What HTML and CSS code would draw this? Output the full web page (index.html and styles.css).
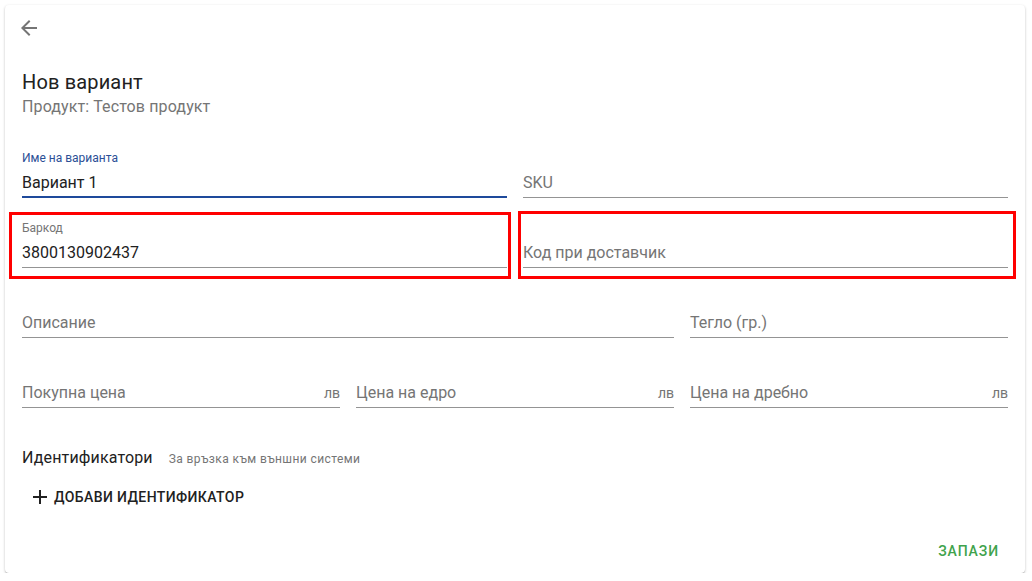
FILE: index.html
```html
<!DOCTYPE html>
<html lang="bg">
<head>
<meta charset="utf-8">
<title>Нов вариант</title>
<link rel="stylesheet" href="styles.css">
</head>
<body>
<div class="card">
  <div class="header">
    <button class="icon-btn" aria-label="Назад">
      <svg width="24" height="24" viewBox="0 0 24 24"><path d="M20 11H7.830l5.59-5.59L12 4l-8 8 8 8 1.41-1.41L7.83 13H20v-2z" fill="#757575"/></svg>
    </button>
  </div>
  <h1 class="title">Нов вариант</h1>
  <div class="subtitle">Продукт: Тестов продукт</div>

  <div class="form">
    <div class="field span3 focused">
      <div class="label label-focused">Име на варианта</div>
      <div class="value">Вариант 1</div>
    </div>
    <div class="field span3">
      <div class="label"></div>
      <div class="value placeholder">SKU</div>
    </div>
    <div class="field span3">
      <div class="mark mark-a"></div>
      <div class="label">Баркод</div>
      <div class="value">3800130902437</div>
    </div>
    <div class="field span3">
      <div class="mark mark-b"></div>
      <div class="label"></div>
      <div class="value placeholder">Код при доставчик</div>
    </div>
    <div class="field span4">
      <div class="label"></div>
      <div class="value placeholder">Описание</div>
    </div>
    <div class="field span2">
      <div class="label"></div>
      <div class="value placeholder">Тегло (гр.)</div>
    </div>
    <div class="field span2">
      <div class="label"></div>
      <div class="value placeholder"><span>Покупна цена</span><span class="suffix">лв</span></div>
    </div>
    <div class="field span2">
      <div class="label"></div>
      <div class="value placeholder"><span>Цена на едро</span><span class="suffix">лв</span></div>
    </div>
    <div class="field span2">
      <div class="label"></div>
      <div class="value placeholder"><span>Цена на дребно</span><span class="suffix">лв</span></div>
    </div>
  </div>

  <div class="ids">
    <span class="ids-title">Идентификатори</span>
    <span class="ids-hint">За връзка към външни системи</span>
  </div>
  <button class="text-btn add-btn">
    <svg width="14" height="14" viewBox="0 0 14 14"><path d="M6 0h2v6h6v2H8v6H6V8H0V6h6z" fill="#212121"/></svg>
    <span>Добави идентификатор</span>
  </button>

  <div class="actions">
    <button class="text-btn save-btn">Запази</button>
  </div>
</div>
</body>
</html>
```

FILE: styles.css
```css
* { box-sizing: border-box; }

body {
  margin: 0;
  background: #ffffff;
  font-family: Roboto, "Noto Sans", "Liberation Sans", sans-serif;
  color: #212121;
}

.card {
  position: relative;
  margin: 5px 0 0 5px;
  width: 1020px;
  height: 568px;
  background: #fff;
  border-radius: 4px;
  box-shadow: 0 1px 3px rgba(0,0,0,0.2), 0 1px 1px rgba(0,0,0,0.14), 0 2px 1px -1px rgba(0,0,0,0.12);
  padding: 0 17px;
}

.header {
  padding-top: 11px;
  margin-left: -5px;
  height: 35px;
}

.icon-btn {
  border: 0;
  background: none;
  padding: 0;
  width: 24px;
  height: 24px;
  display: block;
}
.icon-btn svg { display: block; }

.title {
  margin: 30px 0 0 0;
  font-size: 20px;
  line-height: 24px;
  font-weight: 400;
  letter-spacing: 0.15px;
  color: #212121;
}

.subtitle {
  margin-top: 3px;
  font-size: 16px;
  line-height: 20px;
  letter-spacing: 0.12px;
  color: #757575;
}

.form {
  margin-top: 33px;
  display: grid;
  grid-template-columns: repeat(6, 1fr);
  column-gap: 16px;
  row-gap: 22px;
}

.span2 { grid-column: span 2; }
.span3 { grid-column: span 3; }
.span4 { grid-column: span 4; }

.field {
  position: relative;
  border-bottom: 1px solid #949494;
}

.field.focused {
  border-bottom: 2px solid #1e4a9b;
}
.field.focused .value { padding-bottom: 3px; }

.label {
  height: 15px;
  padding-top: 1px;
  font-size: 12px;
  line-height: 14px;
  color: #757575;
}
.label-focused { color: #2b4f96; }

.value {
  margin-top: 8px;
  font-size: 16px;
  line-height: 20px;
  padding-bottom: 4px;
  color: #212121;
  display: flex;
  justify-content: space-between;
  align-items: baseline;
}

.placeholder { color: #757575; }

.suffix {
  font-size: 14px;
  color: #757575;
}

.mark {
  position: absolute;
  border: 3px solid #ff0000;
  pointer-events: none;
}
.mark-a { left: -13px; right: -4px; top: -8px; bottom: -12px; }
.mark-b { left: -5px; right: -8px; top: -9px; bottom: -12px; }

.ids {
  margin-top: 38px;
  display: flex;
  align-items: baseline;
  line-height: 24px;
}
.ids-title { font-size: 16px; letter-spacing: 0.15px; color: #212121; }
.ids-hint { margin-left: 16px; font-size: 12px; letter-spacing: 0.4px; color: #757575; }

.text-btn {
  border: 0;
  background: none;
  font-family: inherit;
  font-weight: 500;
  font-size: 14px;
  text-transform: uppercase;
  letter-spacing: 0.4px;
  height: 36px;
  padding: 0 8px;
  display: flex;
  align-items: center;
  cursor: pointer;
}

.add-btn {
  margin-top: 8px;
  margin-left: 3px;
  color: #212121;
  gap: 7px;
}
.add-btn svg { display: block; }

.actions {
  margin-top: 18px;
  display: flex;
  justify-content: flex-end;
  margin-right: 1px;
}

.save-btn { color: #3fa34d; letter-spacing: 0.9px; }
```
